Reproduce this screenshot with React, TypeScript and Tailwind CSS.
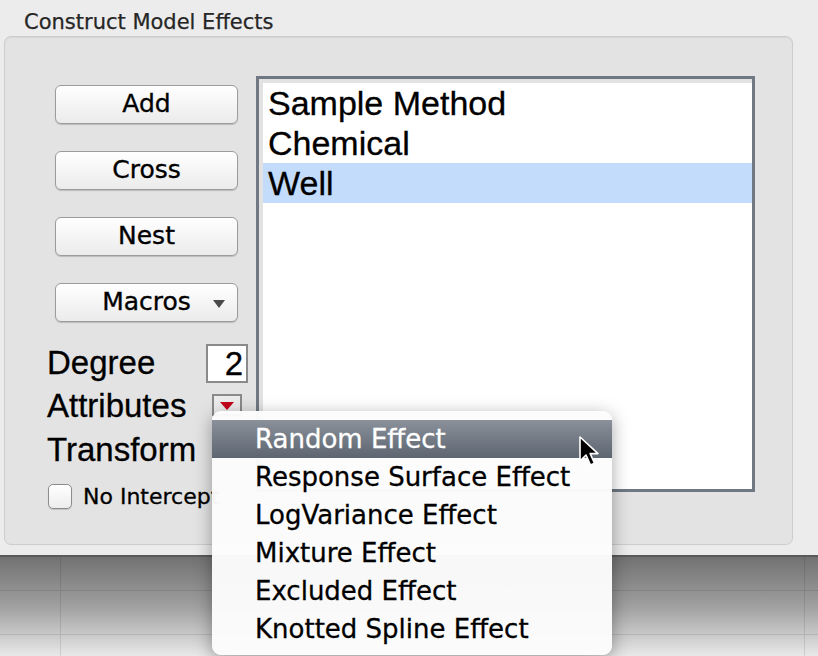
import React from "react";

const lucida = { fontFamily: '"DejaVu Sans", "Noto Sans", sans-serif' };
const helv = { fontFamily: '"Liberation Sans", Arial, sans-serif' };

function Btn({ label, dropdown }: { label: string; dropdown?: boolean }) {
  return (
    <div
      className="relative ml-[8px] w-[183px] h-[39px] rounded-[6px] border border-[#9c9c9c] bg-gradient-to-b from-[#ffffff] to-[#ebebeb] shadow-[0_1px_1px_rgba(0,0,0,0.18)] flex items-center justify-center text-[25px] text-black leading-none [-webkit-text-stroke:0.35px_black]"
      style={lucida}
    >
      <span className="-mt-[2px]">{label}</span>
      {dropdown && (
        <svg className="absolute left-[157px] top-[16px]" width="12" height="8" viewBox="0 0 12 8">
          <path d="M0 0 L12 0 L6 8 Z" fill="#4a4a4a" />
        </svg>
      )}
    </div>
  );
}

const menuItems = [
  "Random Effect",
  "Response Surface Effect",
  "LogVariance Effect",
  "Mixture Effect",
  "Excluded Effect",
  "Knotted Spline Effect",
];

export default function App() {
  return (
    <div className="relative w-[818px] h-[656px] overflow-hidden bg-[#ececec] flex flex-col">
      <div className="h-[36px] pl-[24px] pt-[10px] text-[21px] leading-[24px] text-[#262626] [-webkit-text-stroke:0.25px_#262626]" style={lucida}>
        Construct Model Effects
      </div>

      <div className="ml-[4px] w-[789px] h-[509px] shrink-0 rounded-[7px] border border-[#cdcdcd] bg-[#e3e3e3] shadow-[inset_0_1px_1px_rgba(0,0,0,0.06)] flex items-start">
        <div className="w-[243px] pl-[42px] pt-[48px] flex flex-col">
          <Btn label="Add" />
          <div className="h-[27px]" />
          <Btn label="Cross" />
          <div className="h-[27px]" />
          <Btn label="Nest" />
          <div className="h-[27px]" />
          <Btn label="Macros" dropdown />

          <div className="mt-[20px] h-[42px] flex items-center justify-between [-webkit-text-stroke:0.3px_black]" style={helv}>
            <span className="text-[33px] leading-[42px] text-black">Degree</span>
            <div className="w-[42px] h-[39px] border-2 border-[#8a8a8a] bg-white flex items-center justify-end pr-[3px] text-[33px] leading-none text-black">
              2
            </div>
          </div>
          <div className="h-[44px] flex items-start justify-between [-webkit-text-stroke:0.3px_black]" style={helv}>
            <span className="text-[33px] leading-[44px] text-black">Attributes</span>
            <div className="mt-[10px] mr-[6px] w-[30px] h-[22px] border-2 border-[#8a8a8a] bg-[#ececec] flex justify-center pt-[6px]">
              <svg width="14" height="8" viewBox="0 0 14 8">
                <path d="M0 0 L14 0 L7 8 Z" fill="#c4001a" />
              </svg>
            </div>
          </div>
          <div className="h-[44px] flex items-center [-webkit-text-stroke:0.3px_black]" style={helv}>
            <span className="text-[33px] leading-[44px] text-black">Transform</span>
          </div>
          <div className="mt-[12px] h-[25px] flex items-center">
            <div className="ml-[1px] w-[24px] h-[25px] rounded-[5px] border border-[#8c8c8c] bg-gradient-to-b from-[#ffffff] to-[#ededed] shadow-[0_1px_1px_rgba(0,0,0,0.15)]" />
            <span className="ml-[11px] text-[22px] leading-none text-black whitespace-nowrap [-webkit-text-stroke:0.3px_black]" style={lucida}>
              No Intercept
            </span>
          </div>
        </div>

        <div className="mt-[39px] ml-[8px] w-[499px] h-[416px] border-[3px] border-[#6f7883] bg-white">
          <div className="w-full h-full border-t-4 border-l-4 border-[#e2e2e2] bg-white flex flex-col [-webkit-text-stroke:0.3px_black]" style={helv}>
            <div className="h-[40px] pl-[5px] text-[34px] leading-[40px] text-black">Sample Method</div>
            <div className="h-[40px] pl-[5px] text-[34px] leading-[40px] text-black">Chemical</div>
            <div className="h-[40px] pl-[5px] text-[34px] leading-[40px] text-black bg-[#c3dcfb]">Well</div>
          </div>
        </div>
      </div>

      <div className="mt-[10px] flex-1 border-t-2 border-[#5a5a5a] bg-gradient-to-b from-[#727272] via-[#a0a0a0] to-[#e9e9e9] flex flex-col">
        <div className="h-[34px] flex border-b border-[rgba(0,0,0,0.1)]">
          <div className="w-[61px] border-r border-[rgba(0,0,0,0.1)]" />
          <div className="w-[744px] border-r border-[rgba(0,0,0,0.1)]" />
        </div>
        <div className="h-[44px] flex border-b border-[rgba(0,0,0,0.1)]">
          <div className="w-[61px] border-r border-[rgba(0,0,0,0.1)]" />
          <div className="w-[744px] border-r border-[rgba(0,0,0,0.1)]" />
        </div>
        <div className="flex-1 flex">
          <div className="w-[61px] border-r border-[rgba(0,0,0,0.1)]" />
          <div className="w-[744px] border-r border-[rgba(0,0,0,0.1)]" />
        </div>
      </div>

      <div
        className="absolute left-[212px] top-[411px] w-[400px] h-[244px] rounded-[9px] bg-[rgba(252,252,252,0.97)] shadow-[0_4px_18px_rgba(0,0,0,0.35)] pt-[9px] flex flex-col"
        style={lucida}
      >
        {menuItems.map((m, i) => (
          <div
            key={m}
            className={
              i === 0
                ? "h-[38px] pl-[43px] flex items-center text-[26px] leading-none text-white bg-gradient-to-b from-[#8a919b] to-[#5d6570] [-webkit-text-stroke:0.3px_white]"
                : "h-[38px] pl-[43px] flex items-center text-[26px] leading-none text-black [-webkit-text-stroke:0.3px_black]"
            }
          >
            {m}
          </div>
        ))}
      </div>

      <svg className="absolute left-[578px] top-[435px]" width="26" height="38" viewBox="0 0 26 38">
        <path
          d="M2 2 L2 26 L8 20 L12.5 30 L16.5 28.3 L12.2 18.6 L20 18.6 Z"
          fill="#000"
          stroke="#fff"
          strokeWidth="1.6"
          strokeLinejoin="round"
        />
      </svg>
    </div>
  );
}
